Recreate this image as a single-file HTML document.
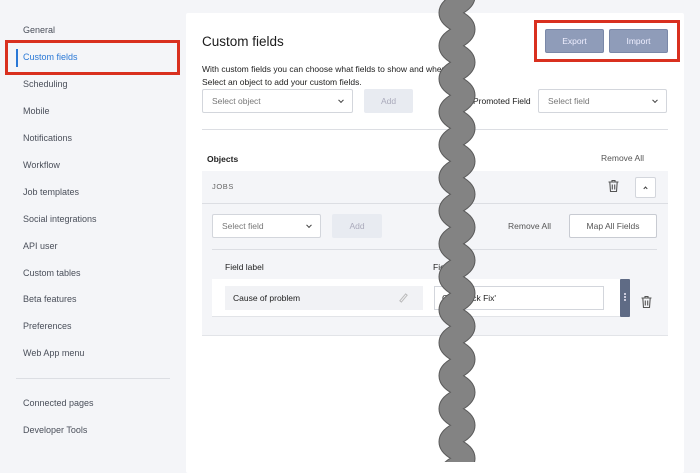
<!DOCTYPE html>
<html><head><meta charset="utf-8"><style>
*{margin:0;padding:0;box-sizing:border-box}
body{width:700px;height:462px;overflow:hidden;background:#f4f5f8;font-family:"Liberation Sans",sans-serif;position:relative;color:#222}
.a{position:absolute;white-space:nowrap}
.nav{left:23px;font-size:9px;color:#4a4f5a}
.sel{position:absolute;background:#fff;border:1px solid #d3d6dc;border-radius:2px;font-size:8.5px;color:#777;padding-left:9px;display:flex;align-items:center}
.sel:after{content:"";position:absolute;right:9px;top:50%;width:3px;height:3px;border-right:1.2px solid #444;border-bottom:1.2px solid #444;transform:translateY(-70%) rotate(45deg)}
.btn{position:absolute;display:flex;align-items:center;justify-content:center;font-size:8.5px;border-radius:2px}
.red{position:absolute;border:3px solid #d9301f}
</style></head><body>
<div class="a nav" style="top:25px">General</div>
<div class="a" style="left:16px;top:49px;width:2px;height:18px;background:#2a78d6"></div>
<div class="a nav" style="top:52px;color:#2a78d6">Custom fields</div>
<div class="a nav" style="top:79px">Scheduling</div>
<div class="a nav" style="top:106px">Mobile</div>
<div class="a nav" style="top:133px">Notifications</div>
<div class="a nav" style="top:160px">Workflow</div>
<div class="a nav" style="top:187px">Job templates</div>
<div class="a nav" style="top:214px">Social integrations</div>
<div class="a nav" style="top:241px">API user</div>
<div class="a nav" style="top:268px">Custom tables</div>
<div class="a nav" style="top:294px">Beta features</div>
<div class="a nav" style="top:321px">Preferences</div>
<div class="a nav" style="top:348px">Web App menu</div>
<div class="a" style="left:16px;top:378px;width:154px;height:1px;background:#dcdee3"></div>
<div class="a nav" style="top:398px">Connected pages</div>
<div class="a nav" style="top:425px">Developer Tools</div>
<div class="red" style="left:5px;top:40px;width:175px;height:35px"></div>

<div class="a" style="left:186px;top:13px;width:498px;height:460px;background:#fff;border-radius:2px"></div>
<div class="a" style="left:202px;top:34px;font-size:13.5px;color:#1c1c1c">Custom fields</div>
<div class="a" style="left:202px;top:63px;font-size:8.5px;color:#222;line-height:13px">With custom fields you can choose what fields to show and when<br>Select an object to add your custom fields.</div>
<div class="sel" style="left:202px;top:89px;width:151px;height:24px">Select object</div>
<div class="btn" style="left:364px;top:89px;width:49px;height:24px;background:#e8ebf1;color:#aab">Add</div>
<div class="a" style="left:473px;top:96px;font-size:8.5px;color:#222">Promoted Field</div>
<div class="sel" style="left:538px;top:89px;width:129px;height:24px">Select field</div>
<div class="btn" style="left:545px;top:29px;width:59px;height:24px;background:#8f9cb9;color:#eef;border:1px solid #7a88a8">Export</div>
<div class="btn" style="left:609px;top:29px;width:59px;height:24px;background:#8f9cb9;color:#eef;border:1px solid #7a88a8">Import</div>
<div class="red" style="left:534px;top:20px;width:146px;height:42px"></div>
<div class="a" style="left:202px;top:129px;width:466px;height:1px;background:#dcdee3"></div>
<div class="a" style="left:207px;top:154px;font-size:8.5px;font-weight:bold;color:#222">Objects</div>
<div class="a" style="left:601px;top:153px;font-size:8.5px;color:#555">Remove All</div>
<div class="a" style="left:202px;top:171px;width:466px;height:165px;background:#f4f5f8;border-bottom:1px solid #e2e4e8"></div>
<div class="a" style="left:212px;top:182px;font-size:7.5px;letter-spacing:.6px;color:#666">JOBS</div>
<svg class="a" style="left:607px;top:179px" width="13" height="14" viewBox="0 0 13 14"><path d="M1.5 3h10M5 3V1.5h3V3M2.8 3l.7 9.5h6l.7-9.5M5.3 5.5v5M7.7 5.5v5" fill="none" stroke="#555" stroke-width="1.1"/></svg>
<div class="a" style="left:635px;top:177px;width:21px;height:21px;background:#fff;border:1px solid #d3d6dc;border-radius:2px"></div>
<div class="a" style="left:644px;top:187px;width:3px;height:3px;border-left:1.2px solid #444;border-top:1.2px solid #444;transform:rotate(45deg)"></div>
<div class="a" style="left:202px;top:203px;width:466px;height:1px;background:#dcdee3"></div>
<div class="sel" style="left:212px;top:214px;width:109px;height:24px">Select field</div>
<div class="btn" style="left:332px;top:214px;width:50px;height:24px;background:#e8ebf1;color:#aab">Add</div>
<div class="a" style="left:508px;top:221px;font-size:8.5px;color:#555">Remove All</div>
<div class="btn" style="left:569px;top:214px;width:88px;height:24px;background:#fff;border:1px solid #c8cbd2;color:#555">Map All Fields</div>
<div class="a" style="left:212px;top:249px;width:445px;height:1px;background:#dcdee3"></div>
<div class="a" style="left:225px;top:262px;font-size:8.5px;color:#222">Field label</div>
<div class="a" style="left:433px;top:262px;font-size:8.5px;color:#222">Field</div>
<div class="a" style="left:212px;top:279px;width:408px;height:38px;background:#fff;border-bottom:1px solid #e2e4e8"></div>
<div class="a" style="left:225px;top:286px;width:198px;height:24px;background:#f1f2f5"></div>
<div class="a" style="left:233px;top:293px;font-size:8.5px;color:#222">Cause of problem</div>
<div class="a" style="left:402px;top:293px;width:3px;height:10px;border:1px solid #bbb;transform:rotate(40deg)"></div>
<div class="a" style="left:434px;top:286px;width:170px;height:24px;background:#fff;border:1px solid #d3d6dc"></div>
<div class="a" style="left:442px;top:293px;font-size:8.5px;color:#222">CashBack Fix'</div>
<div class="a" style="left:620px;top:279px;width:10px;height:38px;background:#5f6b85;border-radius:1px"></div>
<div class="a" style="left:624px;top:293px;width:2px;height:2px;background:#ccd;box-shadow:0 3px #ccd,0 6px #ccd"></div>
<svg class="a" style="left:640px;top:295px" width="13" height="14" viewBox="0 0 13 14"><path d="M1.5 3h10M5 3V1.5h3V3M2.8 3l.7 9.5h6l.7-9.5M5.3 5.5v5M7.7 5.5v5" fill="none" stroke="#555" stroke-width="1.1"/></svg>

<svg class="a" style="left:0;top:0" width="700" height="462"><path d="M457 -12 q15 8.25 0 16.5 t0 16.5 t0 16.5 t0 16.5 t0 16.5 t0 16.5 t0 16.5 t0 16.5 t0 16.5 t0 16.5 t0 16.5 t0 16.5 t0 16.5 t0 16.5 t0 16.5 t0 16.5 t0 16.5 t0 16.5 t0 16.5 t0 16.5 t0 16.5 t0 16.5 t0 16.5 t0 16.5 t0 16.5 t0 16.5 t0 16.5 t0 16.5 t0 16.5 t0 16.5" fill="none" stroke="#5a5a5a" stroke-width="22"/><path d="M457 -12 q15 8.25 0 16.5 t0 16.5 t0 16.5 t0 16.5 t0 16.5 t0 16.5 t0 16.5 t0 16.5 t0 16.5 t0 16.5 t0 16.5 t0 16.5 t0 16.5 t0 16.5 t0 16.5 t0 16.5 t0 16.5 t0 16.5 t0 16.5 t0 16.5 t0 16.5 t0 16.5 t0 16.5 t0 16.5 t0 16.5 t0 16.5 t0 16.5 t0 16.5 t0 16.5 t0 16.5" fill="none" stroke="#838383" stroke-width="20"/></svg>
</body></html>
